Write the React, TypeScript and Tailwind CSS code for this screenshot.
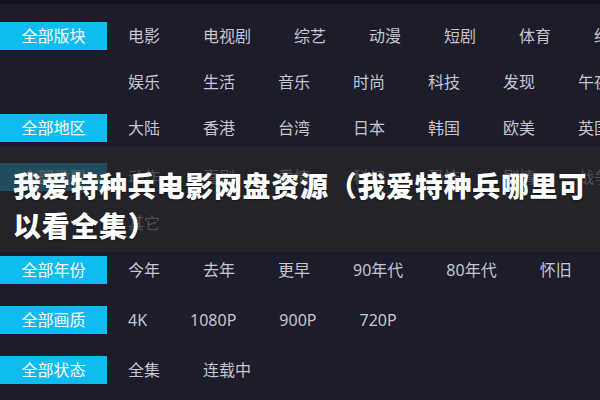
import React from "react";

type Group = { label: string | null; lines: string[][]; mt: number };

const groups: Group[] = [
  {
    label: "全部版块",
    mt: 0,
    lines: [
      ["电影", "电视剧", "综艺", "动漫", "短剧", "体育", "纪录片"],
      ["娱乐", "生活", "音乐", "时尚", "科技", "发现", "午夜"],
    ],
  },
  {
    label: "全部地区",
    mt: 0,
    lines: [["大陆", "香港", "台湾", "日本", "韩国", "欧美", "英国"]],
  },
  {
    label: "全部类型",
    mt: 3,
    lines: [
      ["动作", "喜剧", "爱情", "科幻", "恐怖", "剧情", "战争"],
      ["其它"],
    ],
  },
  {
    label: "全部年份",
    mt: 1,
    lines: [["今年", "去年", "更早", "90年代", "80年代", "怀旧"]],
  },
  {
    label: "全部画质",
    mt: 4,
    lines: [["4K", "1080P", "900P", "720P"]],
  },
  {
    label: "全部状态",
    mt: 4,
    lines: [["全集", "连载中"]],
  },
];

export default function App() {
  return (
    <div
      className="relative w-[600px] h-[400px] overflow-hidden bg-[#1c1c2b] whitespace-nowrap"
      style={{ fontFamily: '"Noto Sans", "Noto Sans CJK SC", sans-serif' }}
    >
      <div className="h-[4px] bg-[#13131e]" />
      <div className="flex flex-col pt-[9px]">
        {groups.map((g, gi) => (
          <div key={gi} className="flex" style={{ marginTop: g.mt }}>
            <div className="w-[128px] shrink-0 pt-[9px]">
              <div className="w-[107px] h-[28px] bg-[#0fbcf1] flex items-center justify-center text-white text-[16px] leading-none">
                {g.label}
              </div>
            </div>
            <div className="flex flex-col">
              {g.lines.map((line, li) => (
                <div
                  key={li}
                  className="h-[46px] flex items-center gap-[43px] text-[16px] text-[#c6c6cf]"
                >
                  {line.map((it) => (
                    <span key={it} className="shrink-0">
                      {it}
                    </span>
                  ))}
                </div>
              ))}
            </div>
          </div>
        ))}
      </div>

      <div className="absolute left-0 right-0 top-[147px] h-[105px] bg-[rgba(38,38,42,0.74)] pl-[13px] pr-[4px] pt-[18px]">
        <div
          className="text-white text-[28px] leading-[40px] font-black tracking-[0.7px] whitespace-normal"
          style={{ fontFamily: '"Noto Sans CJK SC", sans-serif', textShadow: "0 1px 2px rgba(0,0,0,0.4)" }}
        >
          我爱特种兵电影网盘资源（我爱特种兵哪里可以看全集）
        </div>
      </div>
    </div>
  );
}
